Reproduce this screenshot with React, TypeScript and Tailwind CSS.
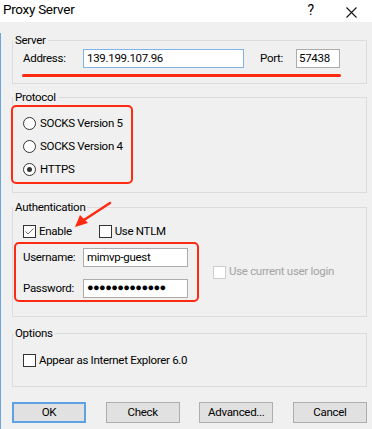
import React from 'react'

const font = { fontFamily: '"Roboto", "Liberation Sans", sans-serif' }

const Radio = ({ label, checked }: { label: string; checked?: boolean }) => (
  <div className="flex h-[23px] items-center">
    <span className="ml-[10px] flex h-[13px] w-[13px] items-center justify-center rounded-full border border-[#333] bg-white">
      {checked && <span className="h-[5px] w-[5px] rounded-full bg-[#333]" />}
    </span>
    <span className="ml-[4px] whitespace-nowrap text-[11.5px] tracking-[-0.3px] text-black">{label}</span>
  </div>
)

const Check = ({ label, checked, disabled }: { label: string; checked?: boolean; disabled?: boolean }) => (
  <div className="flex items-center">
    <span
      className={`flex h-[13px] w-[13px] items-center justify-center border bg-white ${
        disabled ? 'border-[#cdcdcd] bg-[#f7f7f7]' : 'border-[#333]'
      }`}
    >
      {checked && (
        <svg width="11" height="11" viewBox="0 0 11 11">
          <path d="M1.5 5.5 L4 8 L9.5 2.5" stroke="#6b6b6b" strokeWidth="1" fill="none" />
        </svg>
      )}
    </span>
    <span
      className={`ml-[3px] whitespace-nowrap text-[11.5px] tracking-[-0.3px] ${
        disabled ? 'text-[#a3a3a3]' : 'text-black'
      }`}
    >
      {label}
    </span>
  </div>
)

const Group = ({ title, className, children }: { title: string; className?: string; children: React.ReactNode }) => (
  <fieldset className={`border border-[#dcdcdc] ${className ?? ''}`}>
    <legend className="px-[2px] text-[11.5px] leading-[14px] tracking-[-0.3px] text-black">{title}</legend>
    {children}
  </fieldset>
)

export default function App() {
  return (
    <div className="relative h-[429px] w-[372px] overflow-hidden bg-[#f0f0f0]" style={font}>
      {/* title bar */}
      <div className="flex h-[22px] items-start bg-white">
        <span className="ml-[3px] text-[13.5px] leading-[19px] tracking-[-0.3px] text-black">Proxy Server</span>
        <span className="ml-auto mt-[1px] text-[14px] leading-[19px] text-black">?</span>
        <svg className="ml-[32px] mr-[15px] mt-[7px]" width="11" height="11" viewBox="0 0 11 11">
          <path d="M0.5 0.5 L10.5 10.5 M10.5 0.5 L0.5 10.5" stroke="#111" strokeWidth="1.1" />
        </svg>
      </div>

      <div className="h-[407px] border-l border-[#6aa6df] pl-[11px] pr-[5px] text-[11.5px] tracking-[-0.3px]">
        <Group title="Server" className="mt-[11px] pb-[6px]">
          <div className="mt-[2px] flex h-[19px] items-center">
            <span className="ml-[10px] w-[60px]">Address:</span>
            <div className="flex h-[19px] w-[161px] items-center border border-[#7eb4ea] bg-white pl-[3px]">
              139.199.107.96
            </div>
            <span className="ml-[16px] w-[36px]">Port:</span>
            <div className="flex h-[19px] w-[44px] items-center border border-[#acacac] bg-white pl-[2px]">
              57438
            </div>
          </div>
          <div className="ml-[9px] mt-[6px] h-[3px] w-[319px] rounded-full bg-[#ff2a12]" />
        </Group>

        <Group title="Protocol" className="mt-[6px] pb-[8px]">
          <div className="ml-[-2px] mt-[1px] w-[122px] rounded-[5px] border-2 border-[#ff2a12] pb-[1px] pt-[5px]">
            <Radio label="SOCKS Version 5" />
            <Radio label="SOCKS Version 4" />
            <Radio label="HTTPS" checked />
          </div>
        </Group>

        <Group title="Authentication" className="mt-[7px] pb-[14px]">
          <div className="mt-[8px] flex h-[19px] items-center pl-[10px]">
            <Check label="Enable" checked />
            <div className="ml-[27px]">
              <Check label="Use NTLM" />
            </div>
          </div>
          <div className="mt-[1px] flex items-center">
            <div className="ml-[1px] w-[185px] rounded-[5px] border-2 border-[#ff2a12] pb-[2px] pl-[7px] pt-[4px]">
              <div className="flex h-[19px] items-center">
                <span className="w-[60px]">Username:</span>
                <div className="flex h-[19px] w-[105px] items-center border border-[#acacac] bg-white pl-[3px]">
                  mimvp-guest
                </div>
              </div>
              <div className="mt-[12px] flex h-[19px] items-center">
                <span className="w-[60px]">Password:</span>
                <div className="flex h-[19px] w-[105px] items-center border border-[#acacac] bg-white pl-[3px] text-[11px] tracking-[-0.6px]">
                  ●●●●●●●●●●●●●
                </div>
              </div>
            </div>
            <div className="ml-[14px]">
              <Check label="Use current user login" disabled />
            </div>
          </div>
        </Group>

        <Group title="Options" className="mt-[9px] pb-[16px]">
          <div className="mt-[11px] flex h-[19px] items-center pl-[10px]">
            <Check label="Appear as Internet Explorer 6.0" />
          </div>
        </Group>

        <div className="mt-[15px] flex justify-between">
          {['OK', 'Check', 'Advanced...', 'Cancel'].map((b) => (
            <button
              key={b}
              className={`flex h-[21px] w-[74px] items-center justify-center bg-[#e1e1e1] text-black ${
                b === 'OK' ? 'border-2 border-[#5fa2e4]' : 'border border-[#adadad]'
              }`}
            >
              {b}
            </button>
          ))}
        </div>
      </div>

      {/* annotation arrow */}
      <svg className="absolute left-[70px] top-[198px]" width="46" height="34" viewBox="0 0 46 34">
        <path d="M40 5 L14 22" stroke="#ff2a12" strokeWidth="2.5" strokeLinecap="round" />
        <path d="M5 29 L10 17 L18 25 Z" fill="#ff2a12" />
      </svg>
    </div>
  )
}
